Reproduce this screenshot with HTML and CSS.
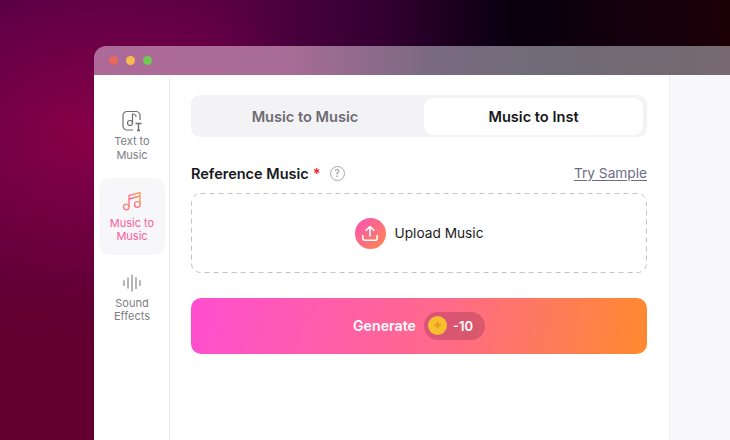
FILE: index.html
```html
<!DOCTYPE html>
<html lang="en">
<head>
    <meta charset="UTF-8">
    <title>Music to Inst</title>
    <link rel="stylesheet" href="styles.css">
</head>
<body>
    <div class="window">
        <div class="titlebar">
            <span class="dot dot-red"></span>
            <span class="dot dot-yellow"></span>
            <span class="dot dot-green"></span>
        </div>
        <div class="app">
            <nav class="sidebar">
                <div class="nav-item">
                    <svg class="nav-icon" width="22" height="22" viewBox="0 0 22 22" fill="none" stroke="#6f6f78" stroke-width="1.2">
                        <path d="M12 20H6a4 4 0 0 1-4-4V5.500a4 4 0 0 1 4-4h9a4 4 0 0 1 4 4V10"/>
                        <path d="M11.500 13V4c1.800 0 3.500.8 3.500 3"/>
                        <circle cx="9" cy="13" r="2.500"/>
                        <path d="M14.500 13.500h6M17.500 13.500V20.500M16 20.500h3" stroke-width="1.400"/>
                    </svg>
                    <span>Text to<br>Music</span>
                </div>
                <div class="nav-item active">
                    <svg class="nav-icon" width="20" height="22" viewBox="0 0 20 22" fill="none" stroke="url(#note-grad)" stroke-width="1.3">
                        <defs>
                            <linearGradient id="note-grad" x1="0" y1="1" x2="1" y2="0">
                                <stop offset="0" stop-color="#ff5fa0"/>
                                <stop offset="1" stop-color="#ff9a4d"/>
                            </linearGradient>
                        </defs>
                        <path d="M7 17V5.500L18 2.500V14.500"/>
                        <path d="M7 9l11-3"/>
                        <circle cx="4.300" cy="17" r="2.800"/>
                        <circle cx="15.300" cy="14.500" r="2.800"/>
                    </svg>
                    <span>Music to<br>Music</span>
                </div>
                <div class="nav-item">
                    <svg class="nav-icon" width="20" height="18" viewBox="0 0 20 18" fill="none" stroke="#85858c" stroke-width="1.2" stroke-linecap="round">
                        <path d="M2 6.500v5M6 4v10M10 1v16M14 3.500v11M18 6.500v5"/>
                    </svg>
                    <span>Sound<br>Effects</span>
                </div>
            </nav>
            <main class="main">
                <div class="tabs">
                    <div class="tab">Music to Music</div>
                    <div class="tab tab-active">Music to Inst</div>
                </div>
                <div class="field-head">
                    <div class="field-label">
                        Reference Music <span class="required">*</span>
                        <span class="help">?</span>
                    </div>
                    <a class="sample-link">Try Sample</a>
                </div>
                <div class="dropzone">
                    <svg class="dash-frame" width="456" height="80" viewBox="0 0 456 80" fill="none">
                        <rect x="0.500" y="0.500" width="455" height="79" rx="9" stroke="#c2c2c8" stroke-dasharray="5 4"/>
                    </svg>
                    <span class="upload-icon">
                        <svg width="18" height="18" viewBox="0 0 18 18" fill="none" stroke="#fff" stroke-width="1.6" stroke-linecap="round" stroke-linejoin="round">
                            <path d="M9 12V2.500M5 6.300L9 2.500l4 3.800"/>
                            <path d="M1.800 11.500v2.700a2 2 0 0 0 2 2h10.400a2 2 0 0 0 2-2v-2.700"/>
                        </svg>
                    </span>
                    Upload Music
                </div>
                <div class="generate">
                    Generate
                    <span class="cost">
                        <span class="coin"><span class="coin-star">✦</span></span>
                        -10
                    </span>
                </div>
            </main>
            <aside class="right-panel"></aside>
        </div>
    </div>
</body>
</html>
```

FILE: styles.css
```css
html, body { margin: 0; height: 100%; overflow: hidden; }
body {
    font-family: Inter, Roboto, sans-serif;
    color: #17171c;
    padding: 46px 0 0 94px;
    box-sizing: border-box;
    background-color: #08000c;
    background-image:
        radial-gradient(ellipse 240px 170px at 85px 135px, #880047 0%, rgba(136,0,71,0) 100%),
        radial-gradient(ellipse 260px 320px at 30px 440px, #640030 0%, #640030 35%, rgba(100,0,48,0) 100%),
        linear-gradient(90deg, #540046 0%, #5a0044 30%, #340032 52%, #08000f 70%, #1c0008 100%);
}

.window { height: 394px; display: flex; flex-direction: column; border-radius: 12px 0 0 0; overflow: hidden; }
.titlebar {
    height: 29px;
    flex: none;
    display: flex;
    align-items: center;
    gap: 8px;
    padding: 0 0 1px 15px;
    box-sizing: border-box;
    background: linear-gradient(90deg, #ad6a99 0%, #a96c98 30%, #7c6a82 52%, #6f6b78 70%, #77696f 100%);
}
.dot { width: 9px; height: 9px; border-radius: 50%; }
.dot-red { background-color: #e8685c; }
.dot-yellow { background-color: #f6bc4e; }
.dot-green { background-color: #70c950; }

.app { flex: 1; display: flex; background-color: #fff; }

.sidebar {
    width: 66px;
    flex: none;
    border-right: 1px solid #ececf0;
    padding: 26px 4px 0 5px;
    display: flex;
    flex-direction: column;
    gap: 3px;
}
.nav-item {
    height: 77px;
    box-sizing: border-box;
    border-radius: 10px;
    display: flex;
    flex-direction: column;
    align-items: center;
    justify-content: center;
    gap: 5px;
    font-size: 11px;
    line-height: 13.5px;
    text-align: center;
    color: #7d7d85;
}
.nav-item:first-child { height: 74px; justify-content: flex-start; padding-top: 9px; gap: 3px; }
.nav-item:last-child { padding-top: 4px; }
.nav-item.active { background-color: #f7f6f8; color: #f8609c; }

.main { width: 456px; flex: none; padding: 20px 22px 0 21px; }

.tabs {
    height: 42px;
    box-sizing: border-box;
    padding: 3px 4px 2px 3px;
    display: flex;
    background-color: #f3f2f5;
    border-radius: 9px;
}
.tab {
    flex: 1;
    margin-right: 8px;
    display: flex;
    align-items: center;
    justify-content: center;
    font-size: 14.6px;
    font-weight: 600;
    color: #6c6c72;
}
.tab-active { flex: none; width: 219px; margin-right: 0; background-color: #fff; border-radius: 9px; color: #16161a; }

.field-head { display: flex; justify-content: space-between; align-items: center; margin-top: 27px; height: 18px; }
.field-label { display: flex; align-items: center; gap: 4px; font-size: 14.5px; font-weight: 600; color: #17171c; }
.required { color: #f01c2c; }
.help {
    width: 15px;
    height: 15px;
    margin-left: 5px;
    box-sizing: border-box;
    border: 1px solid #a8a8ae;
    border-radius: 50%;
    font-size: 10px;
    font-weight: 400;
    line-height: 13px;
    text-align: center;
    color: #8f8f96;
}
.sample-link { font-size: 13.7px; color: #6d6b85; text-decoration: underline; text-underline-offset: 2px; }

.dropzone {
    position: relative;
    height: 80px;
    margin-top: 11px;
    display: flex;
    align-items: center;
    justify-content: center;
    gap: 9px;
    font-size: 13.7px;
    color: #1b1b20;
}
.dash-frame { position: absolute; left: 0; top: 0; }
.upload-icon {
    width: 31px;
    height: 31px;
    border-radius: 50%;
    display: flex;
    align-items: center;
    justify-content: center;
    background: linear-gradient(135deg, #fb4fb8 0%, #ff8a4a 100%);
}

.generate {
    height: 56px;
    margin-top: 25px;
    padding-bottom: 1px;
    box-sizing: border-box;
    border-radius: 10px;
    display: flex;
    align-items: center;
    justify-content: center;
    gap: 8px;
    font-size: 14.2px;
    font-weight: 600;
    color: #fff;
    background: linear-gradient(100deg, #ff4ed0 0%, #ff6a8a 55%, #ff8a2e 100%);
}
.cost {
    height: 28px;
    padding: 0 12px 0 4px;
    display: flex;
    align-items: center;
    gap: 6px;
    border-radius: 14px;
    font-size: 13px;
    background-color: rgba(170, 60, 90, 0.45);
}
.coin {
    width: 19px;
    height: 19px;
    border-radius: 50%;
    display: flex;
    align-items: center;
    justify-content: center;
    background: radial-gradient(circle, #f8bb2a 0%, #f8c030 62%, #ea9a1c 100%);
}
.coin-star { font-size: 11px; line-height: 1; color: #e89c1a; }

.right-panel { flex: 1; border-left: 1px solid #ececf0; background-color: #f9f9fb; }
```
